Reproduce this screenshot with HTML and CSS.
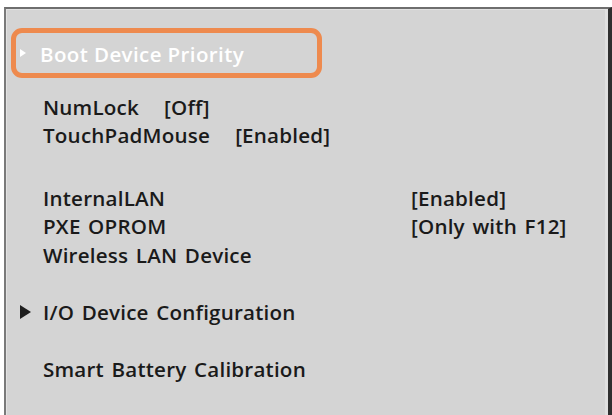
FILE: index.html
```html
<!DOCTYPE html>
<html>
<head>
<meta charset="utf-8">
<link rel="stylesheet" href="styles.css">
</head>
<body>
<div class="frame">
  <div class="highlight">
    <span class="tri tri-white"></span>
    <span class="boot">Boot Device Priority</span>
  </div>
  <div class="group first">
    <div class="row"><span class="label">NumLock</span><span class="inline-val">[Off]</span></div>
    <div class="row"><span class="label">TouchPadMouse</span><span class="inline-val">[Enabled]</span></div>
  </div>
  <div class="group second">
    <div class="row grid"><span class="label">InternalLAN</span><span class="val">[Enabled]</span></div>
    <div class="row grid"><span class="label">PXE OPROM</span><span class="val">[Only with F12]</span></div>
    <div class="row"><span class="label">Wireless LAN Device</span></div>
  </div>
  <div class="group">
    <div class="row sub"><span class="tri tri-black"></span><span class="label">I/O Device Configuration</span></div>
  </div>
  <div class="group">
    <div class="row"><span class="label">Smart Battery Calibration</span></div>
  </div>
</div>
</body>
</html>
```
FILE: styles.css
```css
html, body {
  margin: 0;
  padding: 0;
  background: #ffffff;
  height: 100%;
  overflow: hidden;
}
body {
  font-family: "Open Sans", "Noto Sans", sans-serif;
}
.frame {
  margin: 7px 0 0 4px;
  height: 420px;
  background: #d4d4d4;
  border-top: 2px solid #6e6e6e;
  border-left: 2px solid #7a7a7a;
  border-right: 4px solid #2f2f2f;
  box-shadow: inset 1px 1px 0 #e2e2e2, inset -3px 0 0 #e0e0e0;
  padding: 19px 0 0 5px;
  box-sizing: border-box;
}
.highlight {
  width: 311px;
  height: 50px;
  box-sizing: border-box;
  border: 5px solid #ee8a4e;
  border-radius: 11px;
  display: flex;
  align-items: center;
  padding-left: 4px;
  gap: 14px;
}
.boot {
  color: #ffffff;
  font-weight: 600;
  font-size: 20.5px;
  letter-spacing: 0.4px;
  margin-top: 1px;
}
.tri {
  display: inline-block;
  width: 0;
  height: 0;
  border-style: solid;
}
.tri-white {
  border-width: 4.5px 0 4.5px 6px;
  border-color: transparent transparent transparent #ffffff;
}
.tri-black {
  border-width: 7px 0 7px 11px;
  border-color: transparent transparent transparent #1e1e1e;
  margin-right: 12px;
  margin-left: 9px;
}
.group {
  margin-top: 29px;
  padding-left: 32px;
}
.group.first {
  margin-top: 15px;
}
.group.second {
  margin-top: 34px;
}
.row {
  height: 28.4px;
  line-height: 28.4px;
  font-size: 20.6px;
  font-weight: 600;
  letter-spacing: 0.2px;
  word-spacing: 2px;
  color: #1a1a1a;
  display: flex;
  align-items: center;
}
.row.sub {
  margin-left: -32px;
}
.inline-val {
  margin-left: 25px;
}
.grid {
  display: grid;
  grid-template-columns: 368px auto;
}
```
